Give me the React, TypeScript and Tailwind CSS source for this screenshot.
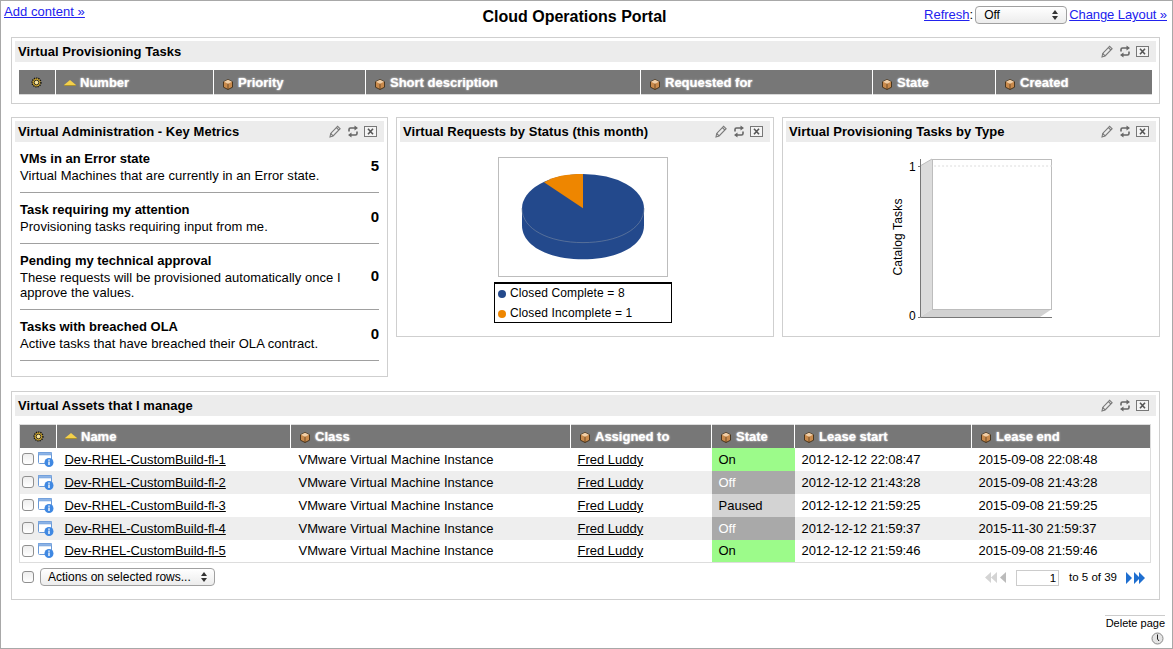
import React from 'react';

const assets = [
  { name: 'Dev-RHEL-CustomBuild-fl-1', state: 'On', start: '2012-12-12 22:08:47', end: '2015-09-08 22:08:48' },
  { name: 'Dev-RHEL-CustomBuild-fl-2', state: 'Off', start: '2012-12-12 21:43:28', end: '2015-09-08 21:43:28' },
  { name: 'Dev-RHEL-CustomBuild-fl-3', state: 'Paused', start: '2012-12-12 21:59:25', end: '2015-09-08 21:59:25' },
  { name: 'Dev-RHEL-CustomBuild-fl-4', state: 'Off', start: '2012-12-12 21:59:37', end: '2015-11-30 21:59:37' },
  { name: 'Dev-RHEL-CustomBuild-fl-5', state: 'On', start: '2012-12-12 21:59:46', end: '2015-09-08 21:59:46' },
];

const metrics = [
  { title: 'VMs in an Error state', text: 'Virtual Machines that are currently in an Error state.', value: 5 },
  { title: 'Task requiring my attention', text: 'Provisioning tasks requiring input from me.', value: 0 },
  { title: 'Pending my technical approval', text: 'These requests will be provisioned automatically once I approve the values.', value: 0 },
  { title: 'Tasks with breached OLA', text: 'Active tasks that have breached their OLA contract.', value: 0 },
];

function HeaderIcons() {
  return (
    <div className="flex items-center shrink-0">
      <svg width="12" height="13" viewBox="0 0 12 13" fill="none" stroke="#7a7a7a" strokeWidth="1.1">
        <path d="M1 12l.7-3.6L8.600 1.300l2.500 2.400-7 7.200z" />
        <path d="M7.400 2.600l2.500 2.400M1.800 8.500l2.200 2.300" />
      </svg>
      <svg width="10" height="13" viewBox="0 0 10 13" fill="none" stroke="#666" strokeWidth="1.600" className="ml-[7px]">
        <path d="M1 6.500V4.500q0-1.500 1.500-1.500H7" />
        <path d="M9 6.500v2q0 1.500-1.500 1.500H3" />
        <path d="M6.500 0.500L10 3l-3.500 2.500zM3.500 7.500L0 10l3.500 2.500z" fill="#666" stroke="none" />
      </svg>
      <svg width="13" height="11" viewBox="0 0 13 11" fill="none" className="ml-[6px]">
        <rect x="0.500" y="0.500" width="12" height="10" fill="#f4f4f4" stroke="#777" />
        <path d="M4 2.800l5 5.400M9 2.800l-5 5.400" stroke="#555" strokeWidth="1.600" />
      </svg>
    </div>
  );
}

function Panel({ title, className, children }: { title: string; className?: string; children?: React.ReactNode }) {
  return (
    <section className={`border border-[#cfcfcf] p-[3px] ${className ?? ''}`}>
      <div className="h-[21px] bg-[#ececec] flex items-center justify-between pl-[3px] pr-[7px]">
        <h2 className="pt-[1px] text-[13px] font-bold text-black tracking-[0.05px]">{title}</h2>
        <HeaderIcons />
      </div>
      {children}
    </section>
  );
}

function BoxIcon() {
  return (
    <svg width="10" height="11" viewBox="0 0 10 11" className="shrink-0 mt-[2px]">
      <path d="M5 .5l4.500 2.300v5.400L5 10.500.5 8.200V2.800z" fill="#c98a4c" stroke="#33240f" strokeWidth="0.800" />
      <path d="M1 2.800l4 2 4-2-4-2z" fill="#f0cfa8" />
      <path d="M5 4.800v5.500" stroke="#33240f" strokeWidth="0.600" />
    </svg>
  );
}

function SortIcon() {
  return (
    <svg width="12" height="6" viewBox="0 0 12 6" className="shrink-0">
      <path d="M6 0l6 5H0z" fill="#f4d04a" />
      <path d="M0 5h12v1H0z" fill="#a89030" />
    </svg>
  );
}

function GearIcon() {
  return (
    <svg width="11" height="11" viewBox="0 0 11 11" className="mx-auto block">
      <circle cx="5.500" cy="5.500" r="4.400" fill="#c9a22c" stroke="#111" strokeWidth="1.400" strokeDasharray="1.300 0.900" />
      <circle cx="5.500" cy="5.500" r="2.300" fill="#f7e49a" stroke="#222" strokeWidth="0.900" />
    </svg>
  );
}

function ColumnHead({ label, sorted, pad }: { label: string; sorted?: boolean; pad?: string }) {
  return (
    <th className="border-l border-white p-0 text-left font-bold">
      <div className={`flex items-center ${sorted ? 'pl-[8px]' : 'pl-[9px]'} ${pad ?? (sorted ? 'gap-[4px]' : 'gap-[5px]')}`}>
        {sorted ? <SortIcon /> : <BoxIcon />}
        <span className="text-white text-[13px] [text-shadow:0_0_2px_#fff]">{label}</span>
      </div>
    </th>
  );
}

function Checkbox() {
  return <span className="block w-[12px] h-[12px] rounded-[3px] border border-[#8f8f8f] bg-gradient-to-b from-[#eeeeee] to-white shrink-0" />;
}

function NativeSelect({ label, className }: { label: string; className?: string }) {
  return (
    <div className={`flex items-center justify-between h-[18px] rounded-[4px] border border-[#a0a0a0] bg-gradient-to-b from-white to-[#ececec] text-[12px] text-black ${className ?? ''}`}>
      <span>{label}</span>
      <svg width="6" height="10" viewBox="0 0 6 10" fill="#333">
        <path d="M3 0l3 4H0zM3 10l3-4H0z" />
      </svg>
    </div>
  );
}

function AssetIcon() {
  return (
    <svg width="16" height="15" viewBox="0 0 16 15" className="shrink-0">
      <rect x="0.500" y="0.500" width="13" height="11" rx="1" fill="#fff" stroke="#6a9ad8" />
      <rect x="0.500" y="0.500" width="13" height="2.500" fill="#8db4e6" stroke="#6a9ad8" strokeWidth="0.500" />
      <circle cx="11" cy="10.500" r="4.500" fill="#3f88e2" />
      <rect x="10.300" y="9.500" width="1.400" height="3.500" fill="#fff" />
      <rect x="10.300" y="7.500" width="1.400" height="1.300" fill="#fff" />
    </svg>
  );
}

const stateCell: Record<string, string> = {
  On: 'bg-[#9cfb8a] text-black',
  Off: 'bg-[#a9a9a9] text-white',
  Paused: 'bg-[#d3d3d3] text-black',
};

function PieChart() {
  return (
    <svg width="170" height="120" viewBox="0 0 170 120" className="block">
      <rect x="0.500" y="0.500" width="169" height="119" fill="#fff" stroke="#bdbdbd" />
      <path d="M24 51.300v17c0 21 27 34 61 34s61-13 61-34v-17z" fill="#23498c" />
      <ellipse cx="85" cy="51.300" rx="61" ry="34.300" fill="#23498c" />
      <path d="M24 51.300c0 21 27 34.300 61 34.300s61-13.300 61-34.300" fill="none" stroke="#6b7f9f" strokeWidth="0.700" />
      <path d="M85 51.300V17C68 17 57 19 46 25.300z" fill="#ee8600" />
    </svg>
  );
}

function BarChart() {
  return (
    <svg width="136" height="170" viewBox="0 0 136 170" className="block">
      <path d="M2 9L14 2v150L2 160z" fill="#dcdcdc" />
      <path d="M2 160l12-8h120l-12 8z" fill="#d2d2d2" />
      <rect x="14.500" y="2.500" width="119" height="150" fill="#fff" stroke="#bdbdbd" />
      <path d="M2 9l12-7" stroke="#bdbdbd" fill="none" />
      <path d="M2 16l12-7h120" stroke="#dcdcdc" strokeDasharray="2 2" fill="none" />
      <path d="M2.500 2v158.500H134" stroke="#777" fill="none" />
      <path d="M0 160.500h2M0 9.500h2" stroke="#777" />
    </svg>
  );
}

export default function App() {
  return (
    <div
      className="h-[649px] w-[1173px] overflow-hidden border border-[#a8a8a8] bg-white pt-[2px] flex flex-col text-[13px] text-black"
      style={{ fontFamily: '"Liberation Sans", Arial, sans-serif' }}
    >
      <header className="h-[34px] flex items-start justify-between pl-[3px] pr-[5px] relative">
        <a className="text-[13px] leading-[18px] text-[#2222ee] underline tracking-[0.05px]">Add content »</a>
        <h1 className="absolute left-0 right-0 top-[4px] pr-[24px] text-center text-[16px] font-bold leading-[20px] pointer-events-none">Cloud Operations Portal</h1>
        <div className="flex items-start gap-[2px] mt-[3px]">
          <span className="leading-[18px]"><a className="text-[#2222ee] underline">Refresh</a>:</span>
          <NativeSelect label="Off" className="w-[92px] px-[8px]" />
          <a className="leading-[18px] text-[#2222ee] underline tracking-[-0.08px]">Change Layout »</a>
        </div>
      </header>

      <div className="pl-[10px] pr-[12px] flex flex-col">
        <Panel title="Virtual Provisioning Tasks" className="h-[67px]">
          <div className="px-[4px] pt-[8px]">
            <table className="w-[1133px] table-fixed border-collapse h-[25px] bg-[#777777] border-b border-[#d8d8d8]">
              <colgroup>
                <col className="w-[36px]" /><col className="w-[158px]" /><col className="w-[152px]" /><col className="w-[275px]" /><col className="w-[232px]" /><col className="w-[123px]" /><col />
              </colgroup>
              <thead>
                <tr>
                  <th className="p-0"><GearIcon /></th>
                  <ColumnHead label="Number" sorted pad="gap-[4.500px] pt-[2px]" />
                  <ColumnHead label="Priority" pad="gap-[5.500px] pt-[2px]" />
                  <ColumnHead label="Short description" pad="gap-[5.500px] pt-[2px]" />
                  <ColumnHead label="Requested for" pad="gap-[5.500px] pt-[2px]" />
                  <ColumnHead label="State" pad="gap-[5.500px] pt-[2px]" />
                  <ColumnHead label="Created" pad="gap-[5.500px] pt-[2px]" />
                </tr>
              </thead>
            </table>
          </div>
        </Panel>

        <div className="mt-[13px] flex gap-[8px] h-[260px]">
          <Panel title="Virtual Administration - Key Metrics" className="w-[377px] shrink-0">
            <div className="px-[5px] pt-[8px]">
              {metrics.map(m => (
                <div key={m.title} className="flex items-center justify-between border-b border-[#a0a0a0] pb-[9px] mb-[8px] last:mb-0">
                  <div className="w-[330px]">
                    <div className="font-bold text-[13px] leading-[17px] text-black">{m.title}</div>
                    <div className="pt-[1px] text-[13px] leading-[15px] tracking-[0.05px]">{m.text}</div>
                  </div>
                  <span className="font-bold text-[15px]">{m.value}</span>
                </div>
              ))}
            </div>
          </Panel>

          <Panel title="Virtual Requests by Status (this month)" className="w-[378px] h-[220px] shrink-0">
            <div className="pl-[98px] pt-[15px]">
              <PieChart />
              <div className="mt-[5px] -ml-[4px] w-[178px] h-[41px] border border-black border-t-2 text-[12px] tracking-[0.12px] pl-[3px] pt-[1px] flex flex-col justify-center gap-[3px] leading-[17px]">
                <div className="flex items-center gap-[4px]"><span className="w-[8px] h-[8px] rounded-full bg-[#23498c]" />Closed Complete = 8</div>
                <div className="flex items-center gap-[4px]"><span className="w-[8px] h-[8px] rounded-full bg-[#ee8600]" />Closed Incomplete = 1</div>
              </div>
            </div>
          </Panel>

          <Panel title="Virtual Provisioning Tasks by Type" className="w-[378px] h-[220px] shrink-0">
            <div className="flex items-start pl-[100px] pt-[15px]">
              <div className="relative w-[32px] h-[170px] text-[12px] leading-none">
                <span className="absolute left-[23px] top-[4px]">1</span>
                <span className="absolute left-[23px] top-[153px]">0</span>
                <span className="absolute left-[12px] top-[80px] -translate-x-1/2 -translate-y-1/2 -rotate-90 whitespace-nowrap tracking-[0.15px]">Catalog Tasks</span>
              </div>
              <BarChart />
            </div>
          </Panel>
        </div>

        <Panel title="Virtual Assets that I manage" className="mt-[14px] h-[209px]">
          <div className="px-[4px] pt-[8px]">
            <table className="w-[1132px] table-fixed border-collapse border border-[#dddddd]">
              <colgroup>
                <col className="w-[37px]" /><col className="w-[234px]" /><col className="w-[280px]" /><col className="w-[141px]" /><col className="w-[83px]" /><col className="w-[177px]" /><col />
              </colgroup>
              <thead>
                <tr className="h-[23px] bg-[#777777]">
                  <th className="p-0"><GearIcon /></th>
                  <ColumnHead label="Name" sorted />
                  <ColumnHead label="Class" />
                  <ColumnHead label="Assigned to" />
                  <ColumnHead label="State" />
                  <ColumnHead label="Lease start" />
                  <ColumnHead label="Lease end" />
                </tr>
              </thead>
              <tbody>
                {assets.map((a, i) => (
                  <tr key={a.name} className={`h-[23px] leading-[17px] ${i % 2 === 1 ? 'bg-[#eeeeee]' : 'bg-white'}`}>
                    <td className="p-0 pl-[2px]">
                      <div className="flex items-center gap-[4px]"><Checkbox /><AssetIcon /></div>
                    </td>
                    <td className="p-0 pl-[8px] underline tracking-[-0.05px]">{a.name}</td>
                    <td className="p-0 pl-[8px] tracking-[0.05px]">VMware Virtual Machine Instance</td>
                    <td className="p-0 pl-[7px] underline">Fred Luddy</td>
                    <td className={`p-0 pl-[7px] ${stateCell[a.state]}`}>{a.state}</td>
                    <td className="p-0 pl-[7px] tracking-[-0.1px]">{a.start}</td>
                    <td className="p-0 pl-[7px] tracking-[-0.1px]">{a.end}</td>
                  </tr>
                ))}
              </tbody>
            </table>
            <div className="flex items-center justify-between mt-[5px] pl-[3px] pr-[7px]">
              <div className="flex items-center gap-[6px]">
                <Checkbox />
                <NativeSelect label="Actions on selected rows..." className="w-[175px] px-[7px]" />
              </div>
              <div className="flex items-center text-[11.5px] mt-[1px]">
                <svg width="21" height="11" viewBox="0 0 21 11"><path d="M6 0v11L0 5.500zM12 0v11L6 5.500z" fill="#d4d4d4" /><path d="M21 0v11l-6-5.500z" fill="#bbbbbb" /></svg>
                <span className="ml-[10px] w-[43px] h-[16px] border border-[#cccccc] text-right pr-[2px] leading-[15px]">1</span>
                <span className="ml-[10px]">to 5 of 39</span>
                <svg width="20" height="12" viewBox="0 0 20 12" fill="#1f6fd0" className="ml-[8px]"><path d="M1 0v12l6-6zM9 0v12l6-6zM14 0v12l6-6z" /></svg>
              </div>
            </div>
          </div>
        </Panel>
      </div>

      <footer className="mt-[15px] flex flex-col items-end pr-[7px]">
        <div className="w-[60px] border-t border-[#cccccc] text-[11px] leading-[15px] text-right whitespace-nowrap">Delete page</div>
        <svg width="13" height="13" viewBox="0 0 13 13" className="mt-[1px] mr-[1px]">
          <circle cx="6.500" cy="6.500" r="5.500" fill="#e4e4e4" stroke="#888" />
          <path d="M6.500 2.500v4.500l1.500 2" stroke="#222" fill="none" />
        </svg>
      </footer>
    </div>
  );
}
